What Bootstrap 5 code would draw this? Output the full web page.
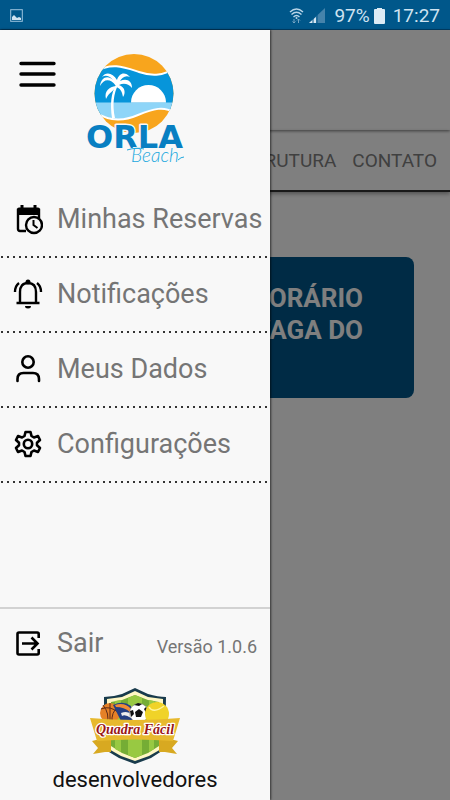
<!DOCTYPE html>
<html lang="pt-BR">
<head>
<meta charset="utf-8">
<meta name="viewport" content="width=device-width, initial-scale=1">
<title>Orla Beach</title>
<link href="https://cdn.jsdelivr.net/npm/bootstrap@5.3.0/dist/css/bootstrap.min.css" rel="stylesheet">
<style>
body { font-family: Roboto, "Noto Sans", sans-serif; background: #fff; }
a { color: inherit; text-decoration: none; }
.statusbar { height: 30px; background: #00578a; color: #cfe3f1; font-size: 19px; line-height: 30px; padding: 2px 10px 0; border-bottom: 1px solid #003f68; }
.site-top { height: 100px; box-shadow: 0 1px 3px rgba(0,0,0,.55); }
.site-nav { height: 62px; gap: 16px; padding: 2px 13px 0 0; font-size: 19px; color: #808080; border-bottom: 2px solid #333; box-shadow: 0 2px 4px rgba(0,0,0,.35); }
.promo { margin: 65px 36px 0; padding: 25px 51px 52px; border-radius: 8px; background: #00578a; color: #fff; font-size: 26px; line-height: 32px; font-weight: 700; text-align: right; }
.shade { background: rgba(0,0,0,.5); }
.drawer { width: 60%; background: #f8f8f8; box-shadow: 1px 0 2px rgba(0,0,0,.6); }
.drawer-head { height: 153px; padding: 22px 0 0 17px; }
.menu-btn { width: 40px; height: 44px; }
.brand-art { margin-left: 28px; }
.drawer-link { height: 75px; padding: 0 0 4px 13px; gap: 14px; font-size: 27px; line-height: 36px; color: #757575; white-space: nowrap;
  background: radial-gradient(circle at 2px 1px, #333 1px, transparent 1px) left bottom / 6px 2px repeat-x; }
.drawer-link svg, .exit svg { flex: none; }
.drawer-foot { border-top: 2px solid #d2d2d2; padding: 16px 13px 7px; }
.exit { gap: 14px; font-size: 27px; line-height: 36px; color: #757575; }
.version { font-size: 18px; line-height: 24px; color: #757575; padding-top: 8px; }
.devs { font-size: 22px; line-height: 26px; color: #111; }
.orla-word { font: 700 32px "DejaVu Sans", sans-serif; }
.beach-word { font: italic 300 19px Lato, sans-serif; }
.quadra-word { font: italic 700 14px "Liberation Serif", serif; }
</style>
<script src="https://cdn.jsdelivr.net/npm/bootstrap@5.3.0/dist/js/bootstrap.bundle.min.js"></script>
</head>
<body>
<div class="d-flex flex-column vh-100 overflow-hidden">
  <div class="statusbar d-flex align-items-center">
    <svg width="13" height="13" viewBox="0 0 13 13" aria-hidden="true"><rect x=".7" y=".7" width="11.6" height="11.6" fill="none" stroke="#9cc4de"/><path d="M2 11V8l2-2 2 2 1 1 2-1 2 1v2z" fill="#cfe3f1"/></svg>
    <svg class="ms-auto me-1" width="17" height="18" viewBox="0 0 17 18" fill="none" stroke="#b8d4e7" stroke-width="1.4" aria-hidden="true"><path d="M2 5Q8.500 -1 15 5M3.500 7.500Q8.500 3 13.500 7.500M5.500 10Q8.500 7 11.500 10"/><circle cx="8.500" cy="11" r="1" fill="#b8d4e7" stroke="none"/><path d="M6 12v4M4.500 14.500 6 16l1.500-1.500M10.500 16v-4M9 13.500l1.500-1.500 1.500 1.500" stroke-width="1" stroke="#76a5c4"/></svg>
    <svg class="me-1" width="17" height="16" viewBox="0 0 17 16" aria-hidden="true"><path d="M16 0v15H0z" fill="#4583ab"/><path d="M7 9v6H0z" fill="#d7e8f3"/><path d="M4 10v5M8 7v8" stroke="#00578a"/></svg>
    <span class="ms-1">97%</span>
    <svg class="mx-1" width="11" height="16" viewBox="0 0 11 16" aria-hidden="true"><path d="M3 0h5v1h2q1 0 1 1v13q0 1-1 1H1q-1 0-1-1V2q0-1 1-1h2z" fill="#dcebf5"/></svg>
    <span class="ms-1">17:27</span>
  </div>

  <div class="position-relative flex-grow-1">
    <main>
      <div class="site-top"></div>
      <nav class="site-nav d-flex align-items-center justify-content-end" aria-label="Site">
        <a href="#estrutura">ESTRUTURA</a>
        <a href="#contato">CONTATO</a>
      </nav>
      <section class="promo">HORÁRIO<br>VAGA DO</section>
    </main>
    <div class="shade position-absolute top-0 start-0 w-100 h-100"></div>

    <aside class="drawer position-absolute top-0 start-0 h-100 d-flex flex-column">
      <div class="drawer-head d-flex align-items-start">
        <button class="menu-btn btn p-0 border-0 d-flex align-items-center justify-content-center" type="button" aria-label="Menu">
          <svg width="38" height="28" viewBox="0 0 38 28" fill="none" stroke="#000" stroke-width="3.400" stroke-linecap="round"><path d="M3 3.500h33M3 14h33M3 25h33"/></svg>
        </button>
        <svg class="brand-art" width="102" height="114" viewBox="85 51 102 114" role="img" aria-label="Orla Beach">
          <defs><clipPath id="disc"><circle cx="134" cy="92.500" r="39.500"/></clipPath></defs>
          <g clip-path="url(#disc)">
            <path d="M90 50h90v90H90z" fill="#f8a51d"/>
            <path d="M94 71C112 61 124 66 139 71S163 74 176 67V113C165 104 149 109 138 114S113 121 94 111z" fill="#0795da"/>
            <path d="M94 101.500h82V113C165 104 149 109 138 114S113 121 94 111z" fill="#8ed5f8"/>
            <path d="M94 71C112 61 124 66 139 71S163 74 176 67M94 111C112 121 124 120 138 114S165 104 176 113" fill="none" stroke="#fff" stroke-width="2"/>
            <path d="M131 101.500a17.500 17.500 0 0 1 35 0z" fill="#fff"/>
            <path d="M116 84C111 92 110 103 112 117h3C112 103 114 92 118 84z" fill="#fff"/>
            <path d="M116 85C110 77 104 78 100 85 101 76 108 74 113 79 109 74 105 74 102 76 106 70 113 72 117 79 119 72 125 70 130 76 125 74 122 77 120 80 127 77 132 80 132 87 128 82 123 82 119 84 125 86 126 92 123 96 122 90 120 87 116 86 114 90 109 91 106 98 104 90 109 86 116 85z" fill="#fff"/>
          </g>
          <text class="orla-word" x="86" y="147" fill="#087fc2" stroke="#f8f8f8" stroke-width="3" paint-order="stroke" stroke-linejoin="round">ORLA</text>
          <text class="beach-word" x="131" y="161" fill="#22a8de" stroke="#f8f8f8" stroke-width="2" paint-order="stroke">Beach</text>
          <path d="M127 149q10-3 17-1M178 159q3-3 6-3" fill="none" stroke="#22a8de" stroke-width="1"/>
        </svg>
      </div>

      <nav aria-label="Menu principal">
        <a class="drawer-link d-flex align-items-center" href="#reservas">
          <svg width="30" height="32" viewBox="0 0 30 32" fill="none" stroke="#000" stroke-width="2.400" aria-hidden="true"><path d="M13 28H7q-2 0-2-2V7h21v8"/><path d="M4 6.500q0-2 2-2h19q2 0 2 2V12H4z" fill="#000" stroke="none"/><path d="M9 2v4M22 2v4" stroke-width="3"/><circle cx="21" cy="22" r="8" fill="#f8f8f8"/><path d="M20.500 17v5l4 3" stroke-width="2"/></svg>
          <span>Minhas Reservas</span>
        </a>
        <a class="drawer-link d-flex align-items-center" href="#notificacoes">
          <svg width="30" height="32" viewBox="0 0 30 32" fill="none" stroke="#000" stroke-width="2.400" aria-hidden="true"><path d="M7 25V14q0-9 8-9t8 9v11M3.500 25h23"/><circle cx="15" cy="4" r="2.500" fill="#000" stroke="none"/><path d="M12 28h6q0 2.500-3 2.500t-3-2.500z" fill="#000" stroke="none"/><path d="M2 14Q2 8 6 5M28 14q0-6-4-9"/></svg>
          <span>Notificações</span>
        </a>
        <a class="drawer-link d-flex align-items-center" href="#dados">
          <svg width="30" height="32" viewBox="0 0 30 32" fill="none" stroke="#000" stroke-width="2.600" stroke-linecap="round" aria-hidden="true"><circle cx="15" cy="9" r="5.700"/><path d="M4.500 28v-2q0-6 6-6h9.500q6 0 6 6v2"/></svg>
          <span>Meus Dados</span>
        </a>
        <a class="drawer-link d-flex align-items-center" href="#config">
          <svg width="30" height="32" viewBox="0 0 30 32" fill="none" stroke="#000" stroke-width="2.600" stroke-linejoin="round" aria-hidden="true"><path d="M12.500 4h5l1 4 2.500 1.500 4-1.500 2 4-3 2.800v2.400l3 2.800-2 4-4-1.500-2.500 1.500-1 4h-5l-1-4L9 22.500 5 24l-2-4 3-2.800v-2.400L3 12l2-4 4 1.500L11.500 8z"/><circle cx="15" cy="16" r="4.200"/></svg>
          <span>Configurações</span>
        </a>
      </nav>

      <footer class="drawer-foot mt-auto">
        <div class="d-flex align-items-center justify-content-between">
          <a class="exit d-flex align-items-center" href="#sair">
            <svg width="30" height="30" viewBox="0 0 30 30" fill="none" stroke="#000" stroke-width="2.600" aria-hidden="true"><path d="M25.700 10V6q0-1.500-1.500-1.500H6Q4.500 4.500 4.500 6v19q0 1.500 1.500 1.500h18.200q1.500 0 1.500-1.500v-4M9 15.500h15M18.500 9.500l6 6-6 6"/></svg>
            <span>Sair</span>
          </a>
          <span class="version">Versão 1.0.6</span>
        </div>
        <div class="text-center pt-4">
          <svg class="d-block mx-auto" width="96" height="82" viewBox="87 684 96 82" role="img" aria-label="Quadra Fácil">
            <path d="M135 687 148 693Q158 696 166 696L165 748 151 757 135 763 119 757 104 748V696Q113 696 122 693z" fill="#193b4c"/>
            <path d="M135 690 148 696 163 698V747L149 755 135 760 121 755 107 747V698L122 696z" fill="#fff7c4"/>
            <path d="M135 694 148 699 159 701V745L148 752 135 757 122 752 111 745V701L122 699z" fill="#75ad35"/>
            <path d="M128 697 135 694 142 697V754L135 757 128 754zM115 700l6-1v52l-6-3zM149 699l5 1v48l-5 3z" fill="#98c942"/>
            <circle cx="110" cy="712" r="10" fill="#e58127"/><path d="M110 702v20M101 708q9-4 18 4M103 704q7 9 4 18M118 706q-7 5-6 16" fill="none" stroke="#5b2a19"/>
            <path d="M113 704q10-5 18 1l2 15h-12z" fill="#243f83"/><path d="M115 704q10-3 16 4l-1 3q-6-5-14-5z" fill="#f08b34"/><path d="M121 712q7-3 11 2l-1 3q-6-4-9-2z" fill="#eee"/>
            <circle cx="139" cy="712" r="9.500" fill="#fff" stroke="#777" stroke-width=".5"/><path d="m139 708 4 3-2 5h-5l-1-5zM134 704l4-2 4 1-3 2zM146 706l3 5-3 1-2-4zM130 710l3-1 1 4-3 3z" fill="#111"/>
            <circle cx="157" cy="713" r="12" fill="#f0d328"/><path d="M149 706q4 7 15-1" fill="none" stroke="#fff59b" stroke-width="1.500"/>
            <path d="M96 739h15v12h-6l-12 2 5-6-6-7zM174 739h-15v12h6l12 2-5-6 6-7z" fill="#d8a921"/>
            <path d="M90 717Q135 721 180 717L173 740Q135 737 97 740z" fill="#e7b92e"/>
            <text class="quadra-word" x="135" y="733" text-anchor="middle" fill="#9a1717" stroke="#fff" stroke-width="2.500" paint-order="stroke" stroke-linejoin="round">Quadra Fácil</text>
          </svg>
          <div class="devs">desenvolvedores</div>
        </div>
      </footer>
    </aside>
  </div>
</div>
</body>
</html>
